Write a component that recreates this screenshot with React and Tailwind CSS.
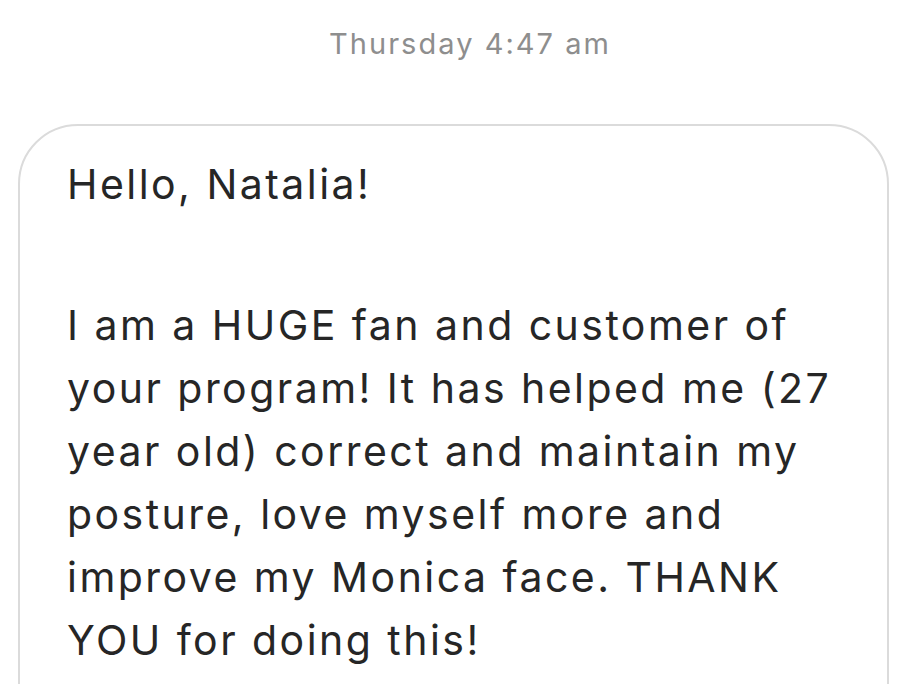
export default function App() {
  return (
    <div className="min-h-[684px] bg-white overflow-hidden" style={{ fontFamily: 'Inter, "Liberation Sans", sans-serif' }}>
      <div className="pt-[25px] text-center text-[29px] leading-[38px] tracking-[0.07em] text-[#8e8e8e] pl-[34px]">Thursday 4:47 am</div>
      <div className="mt-[61px] ml-[18px] mr-[17px] h-[700px] rounded-[60px] border-2 border-[#dbdbdb] pl-[47px] pr-[24px] pt-[27px] text-[41px] leading-[63px] tracking-[0.06em] text-[#262626]">
        <p>Hello, Natalia!</p>
        <p className="mt-[78px]">
          I am a HUGE fan and customer of your program! It has helped me (27 year old) correct and maintain my posture, love myself more and improve my Monica face. THANK YOU for doing this!
        </p>
      </div>
    </div>
  )
}
